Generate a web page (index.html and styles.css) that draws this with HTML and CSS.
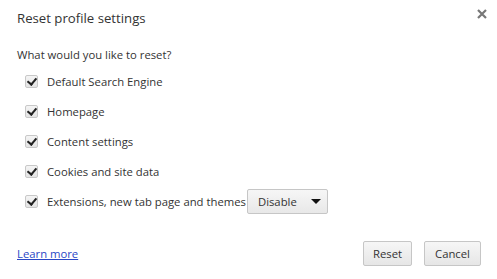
FILE: index.html
```html
<!DOCTYPE html>
<html lang="en">
<head>
    <meta charset="UTF-8">
    <title>Reset profile settings</title>
    <link rel="stylesheet" href="styles.css">
</head>
<body>
    <div class="dialog">
        <div class="dialog-header">
            <h1>Reset profile settings</h1>
            <button class="close" aria-label="Close">
                <svg width="10" height="10" viewBox="0 0 10 10"><path d="M1 1L9 9M9 1L1 9" stroke="#777" stroke-width="2.2"/></svg>
            </button>
        </div>
        <p class="question">What would you like to reset?</p>
        <ul class="options">
            <li><span class="check"></span>Default Search Engine</li>
            <li><span class="check"></span>Homepage</li>
            <li><span class="check"></span>Content settings</li>
            <li><span class="check"></span>Cookies and site data</li>
            <li>
                <span class="check"></span>Extensions, new tab page and themes
                <div class="select">Disable <span class="arrow"></span></div>
            </li>
        </ul>
        <div class="dialog-footer">
            <a href="#" class="learn">Learn more</a>
            <div class="buttons">
                <button class="btn reset">Reset</button>
                <button class="btn cancel">Cancel</button>
            </div>
        </div>
    </div>
</body>
</html>
```

FILE: styles.css
```css
body {
    margin: 0;
    background: #fff;
    font-family: "Open Sans", "Noto Sans", Arial, sans-serif;
    font-size: 11.3px;
    color: #333;
}
.dialog {
    width: 497px;
    height: 279px;
    box-sizing: border-box;
    padding: 0 16px 0 17px;
    display: flex;
    flex-direction: column;
}
.dialog-header {
    display: flex;
    justify-content: space-between;
    align-items: flex-start;
    height: 37px;
}
h1 {
    margin: 9px 0 0;
    font-size: 13.2px;
    font-weight: normal;
    color: #333;
}
.close {
    border: none;
    background: none;
    padding: 0;
    margin: 7px -6px 0 0;
    width: 10px;
    height: 10px;
}
.question {
    margin: 10px 0 0;
    line-height: 16px;
}
.options {
    list-style: none;
    margin: 3px 0 0 8px;
    padding: 0;
}
.options li {
    height: 30px;
    display: flex;
    align-items: center;
}
.check {
    width: 11px;
    height: 11px;
    border: 1px solid #c8c8c8;
    border-radius: 2px;
    background: linear-gradient(#f4f4f4, #e4e4e4);
    margin-right: 9px;
    position: relative;
}
.check::after {
    content: "";
    position: absolute;
    left: 3px;
    top: 0px;
    width: 4px;
    height: 7px;
    border: solid #222;
    border-width: 0 2.5px 2.5px 0;
    transform: rotate(40deg);
}
.select {
    margin-left: 1px;
    width: 81px;
    height: 25px;
    box-sizing: border-box;
    border: 1px solid #c6c6c6;
    border-radius: 2px;
    background: linear-gradient(#f6f6f6, #e8e8e8);
    display: flex;
    align-items: center;
    justify-content: space-between;
    padding: 0 6px 0 10px;
}
.arrow {
    width: 0;
    height: 0;
    border-left: 5px solid transparent;
    border-right: 5px solid transparent;
    border-top: 5px solid #111;
}
.dialog-footer {
    margin-top: auto;
    margin-bottom: 13px;
    display: flex;
    justify-content: space-between;
    align-items: center;
}
.learn {
    color: #2a47c6;
    text-decoration: underline;
}
.buttons {
    display: flex;
    gap: 12px;
}
.btn {
    height: 25px;
    padding: 0;
    font-family: inherit;
    font-size: 11.3px;
    color: #333;
    border: 1px solid #c6c6c6;
    border-radius: 2px;
    background: linear-gradient(#f6f6f6, #e6e6e6);
}
.reset {
    width: 49px;
}
.cancel {
    width: 57px;
}
```
